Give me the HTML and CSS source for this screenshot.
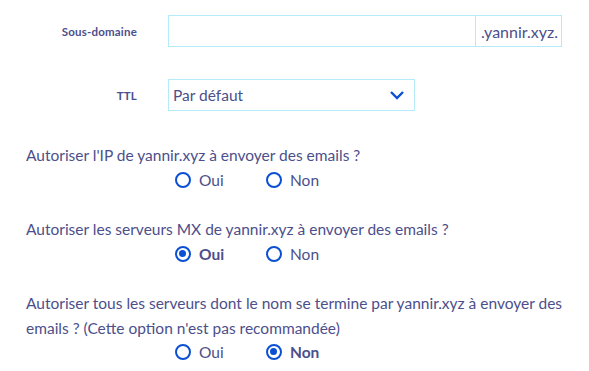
FILE: index.html
```html
<!DOCTYPE html>
<html lang="fr">
<head>
  <meta charset="UTF-8" />
  <title>Enregistrement SPF</title>
  <link rel="stylesheet" href="styles.css">
</head>
<body>
  <form class="form">
    <div class="field">
      <label class="field-label" for="subdomain">Sous-domaine</label>
      <div class="input-group">
        <input class="input" id="subdomain" type="text">
        <span class="addon">.yannir.xyz.</span>
      </div>
    </div>

    <div class="field">
      <label class="field-label" for="ttl">TTL</label>
      <div class="select">
        <span>Par défaut</span>
        <svg width="16" height="10" viewBox="0 0 16 10"><path d="M2 2 L8 8 L14 2" fill="none" stroke="#0b50d4" stroke-width="2.4"/></svg>
      </div>
    </div>

    <div class="question">
      <p>Autoriser l'IP de yannir.xyz à envoyer des emails ?</p>
      <div class="radios">
        <label class="radio"><span class="dot"></span>Oui</label>
        <label class="radio"><span class="dot"></span>Non</label>
      </div>
    </div>

    <div class="question">
      <p>Autoriser les serveurs MX de yannir.xyz à envoyer des emails ?</p>
      <div class="radios">
        <label class="radio checked"><span class="dot"></span>Oui</label>
        <label class="radio"><span class="dot"></span>Non</label>
      </div>
    </div>

    <div class="question">
      <p>Autoriser tous les serveurs dont le nom se termine par yannir.xyz à envoyer des emails ? (Cette option n'est pas recommandée)</p>
      <div class="radios">
        <label class="radio"><span class="dot"></span>Oui</label>
        <label class="radio checked"><span class="dot"></span>Non</label>
      </div>
    </div>
  </form>
</body>
</html>
```

FILE: styles.css
```css
body {
  margin: 0;
  background: #fff;
  font-family: Lato, "Open Sans", sans-serif;
  color: #4c4f8b;
}

.form {
  padding: 15px 0 0 26px;
  width: 540px;
}

.field {
  display: grid;
  grid-template-columns: 111px auto;
  column-gap: 31px;
  align-items: center;
  margin-bottom: 32px;
}

.field-label {
  text-align: right;
  font-size: 11.5px;
  font-weight: bold;
  letter-spacing: 0.2px;
}

.input-group {
  display: flex;
  height: 32px;
  width: 394px;
}

.input {
  flex: 1;
  border: 1px solid #b5ebf8;
  border-right: none;
  margin: 0;
  padding: 0 6px;
  outline: none;
}

.addon {
  border: 1px solid #b5ebf8;
  padding: 0 3px 0 5px;
  display: flex;
  align-items: center;
  font-size: 16px;
}

.select {
  width: 247px;
  height: 32px;
  box-sizing: border-box;
  border: 1px solid #b5ebf8;
  display: flex;
  align-items: center;
  justify-content: space-between;
  padding: 0 9px 0 4px;
  font-size: 15.5px;
}

.question {
  margin-bottom: 25px;
  font-size: 15.5px;
  line-height: 24.5px;
}

.question:last-child {
  margin-bottom: 0;
}

.question p {
  margin: 0;
}

.radios {
  display: flex;
  padding-left: 149px;
}

.radio {
  display: flex;
  align-items: center;
  width: 91px;
}

.dot {
  width: 16px;
  height: 16px;
  box-sizing: border-box;
  border: 2.5px solid #0b50d4;
  border-radius: 50%;
  margin-right: 8px;
  position: relative;
}

.checked {
  font-weight: bold;
}

.checked .dot::after {
  content: "";
  position: absolute;
  left: 2px;
  top: 2px;
  width: 7px;
  height: 7px;
  border-radius: 50%;
  background: #0b50d4;
}
```
